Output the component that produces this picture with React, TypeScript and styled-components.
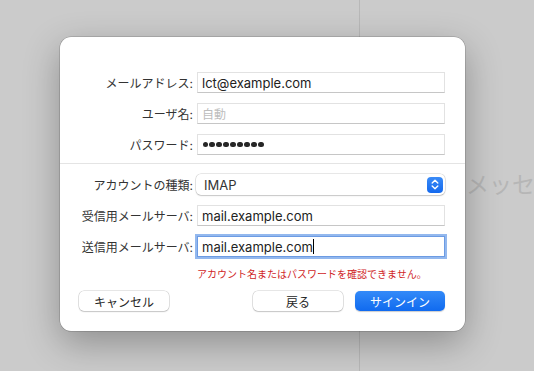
import { createGlobalStyle, styled } from "styled-components";

const GlobalStyle = createGlobalStyle`
  body {
    margin: 0;
    font-family: "Inter", "Noto Sans CJK JP", sans-serif;
  }
`;

const Window = styled.div`
  position: relative;
  width: 534px;
  height: 371px;
  display: flex;
  background: #cbcbcb;
  overflow: hidden;
`;

const LeftPane = styled.div`
  width: 359px;
  border-right: 1px solid #b8b8b8;
`;

const RightPane = styled.div`
  flex: 1;
  display: flex;
  align-items: center;
  padding: 0 0 5px 106px;
  white-space: nowrap;
  overflow: hidden;
`;

const EmptyText = styled.span`
  font-family: "Noto Sans CJK JP", sans-serif;
  font-size: 23px;
  color: #b6b6b6;
`;

const Sheet = styled.div`
  position: absolute;
  left: 60px;
  top: 37px;
  width: 405px;
  height: 294px;
  box-sizing: border-box;
  background: #ffffff;
  border-radius: 11px;
  box-shadow: 0 0 0 0.5px rgba(0, 0, 0, 0.25), 0 12px 36px rgba(0, 0, 0, 0.3);
  display: flex;
  flex-direction: column;
`;

const Form = styled.div<{ $top: number; $bottom: number }>`
  display: grid;
  grid-template-columns: 113px 248px;
  column-gap: 4px;
  row-gap: 10px;
  align-items: center;
  padding: ${(p) => p.$top}px 20px ${(p) => p.$bottom}px 20px;
`;

const Divider = styled.div`
  height: 1px;
  background: #e4e4e4;
`;

const Label = styled.div`
  text-align: right;
  font-size: 12px;
  color: #333333;
  white-space: nowrap;
`;

const Field = styled.div<{ $focused?: boolean }>`
  height: 21px;
  box-sizing: border-box;
  display: flex;
  align-items: center;
  padding-left: 4px;
  background: #ffffff;
  border: 1px solid ${(p) => (p.$focused ? "#6c9be3" : "#e2e2e2")};
  border-bottom-color: ${(p) => (p.$focused ? "#6c9be3" : "#c6c6c6")};
  box-shadow: ${(p) => (p.$focused ? "0 0 0 2px #93b8ee" : "none")};
  font-size: 13px;
  color: #222222;
`;

const Placeholder = styled.span`
  font-size: 12px;
  color: #bdbdbd;
`;

const Dots = styled.div`
  display: flex;
  gap: 1.6px;
  padding-left: 0.5px;
`;

const Dot = styled.span`
  width: 5.4px;
  height: 5.4px;
  border-radius: 50%;
  background: #262626;
`;

const Caret = styled.span`
  display: inline-block;
  width: 1px;
  height: 15px;
  background: #000000;
  margin-left: 0.5px;
`;

const Popup = styled.div`
  height: 21px;
  box-sizing: border-box;
  display: flex;
  align-items: center;
  justify-content: space-between;
  padding: 0 2px 0 8px;
  border-radius: 5px;
  background: #ffffff;
  box-shadow: 0 0 0 0.5px rgba(0, 0, 0, 0.18), 0 1px 1.5px rgba(0, 0, 0, 0.15);
  font-size: 13px;
  color: #333333;
  margin-left: -1px;
`;

const Stepper = styled.div`
  width: 16px;
  height: 16px;
  border-radius: 4px;
  background: linear-gradient(#3a8bf7, #1469ee);
  display: flex;
  align-items: center;
  justify-content: center;
`;

const ErrorText = styled.div`
  grid-column: 2;
  font-size: 10px;
  line-height: 14px;
  color: #d0261f;
  white-space: nowrap;
`;

const Buttons = styled.div`
  display: flex;
  align-items: center;
  gap: 12px;
  padding: 0 20px 0 19px;
  margin-top: 10px;
`;

const Spacer = styled.div`
  flex: 1;
`;

const Button = styled.button<{ $primary?: boolean }>`
  width: 90px;
  height: 20px;
  padding: 0;
  border: none;
  border-radius: 5px;
  font-family: "Noto Sans CJK JP", sans-serif;
  font-size: 12px;
  color: ${(p) => (p.$primary ? "#ffffff" : "#262626")};
  background: ${(p) =>
    p.$primary ? "linear-gradient(#338af8, #106aef)" : "#ffffff"};
  box-shadow: ${(p) =>
    p.$primary
      ? "0 0.5px 1px rgba(0, 0, 0, 0.2)"
      : "0 0 0 0.5px rgba(0, 0, 0, 0.2), 0 1px 1.5px rgba(0, 0, 0, 0.14)"};
`;

function StepperIcon() {
  return (
    <svg width="8" height="11" viewBox="0 0 8 11" fill="none">
      <path
        d="M1.2 4 L4 1.3 L6.8 4 M1.2 7 L4 9.7 L6.8 7"
        stroke="#ffffff"
        strokeWidth="1.4"
        strokeLinecap="round"
        strokeLinejoin="round"
      />
    </svg>
  );
}

export default function App() {
  return (
    <Window>
      <GlobalStyle />
      <LeftPane />
      <RightPane>
        <EmptyText>メッセージが選択されていません</EmptyText>
      </RightPane>
      <Sheet>
        <Form $top={35} $bottom={8}>
          <Label>メールアドレス:</Label>
          <Field>lct@example.com</Field>
          <Label>ユーザ名:</Label>
          <Field>
            <Placeholder>自動</Placeholder>
          </Field>
          <Label>パスワード:</Label>
          <Field>
            <Dots>
              {Array.from({ length: 9 }).map((_, i) => (
                <Dot key={i} />
              ))}
            </Dots>
          </Field>
        </Form>
        <Divider />
        <Form $top={10} $bottom={0}>
          <Label>アカウントの種類:</Label>
          <Popup>
            IMAP
            <Stepper>
              <StepperIcon />
            </Stepper>
          </Popup>
          <Label>受信用メールサーバ:</Label>
          <Field>mail.example.com</Field>
          <Label>送信用メールサーバ:</Label>
          <Field $focused>
            mail.example.com
            <Caret />
          </Field>
          <ErrorText>アカウント名またはパスワードを確認できません。</ErrorText>
        </Form>
        <Buttons>
          <Button>キャンセル</Button>
          <Spacer />
          <Button>戻る</Button>
          <Button $primary>サインイン</Button>
        </Buttons>
      </Sheet>
    </Window>
  );
}
